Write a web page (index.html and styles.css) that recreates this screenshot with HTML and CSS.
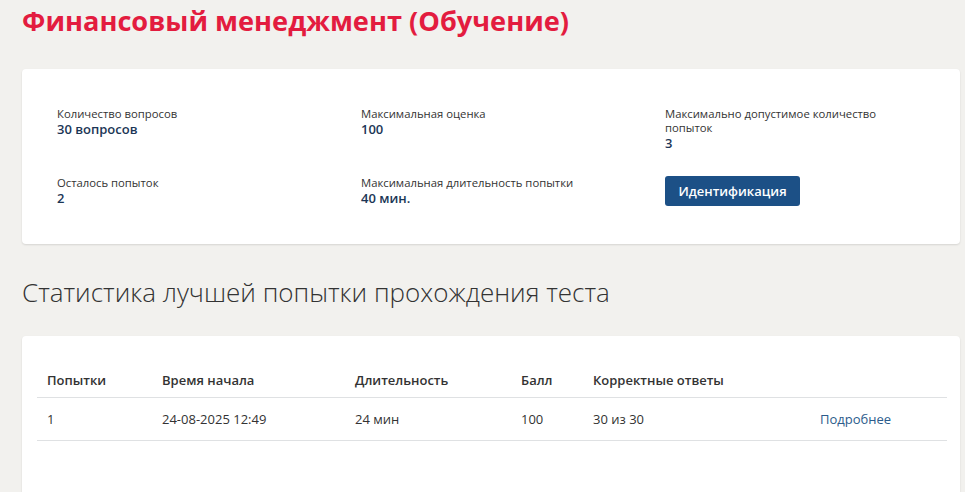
FILE: index.html
```html
<!DOCTYPE html>
<html lang="ru">
<head>
<meta charset="utf-8">
<title>Финансовый менеджмент (Обучение)</title>
<link rel="stylesheet" href="styles.css">
</head>
<body>
<div class="page">
  <h1 class="title">Финансовый менеджмент (Обучение)</h1>

  <section class="card info">
    <div class="info-grid">
      <div class="item">
        <div class="label">Количество вопросов</div>
        <div class="value">30 вопросов</div>
      </div>
      <div class="item">
        <div class="label">Максимальная оценка</div>
        <div class="value">100</div>
      </div>
      <div class="item">
        <div class="label">Максимально допустимое количество попыток</div>
        <div class="value">3</div>
      </div>
      <div class="item">
        <div class="label">Осталось попыток</div>
        <div class="value">2</div>
      </div>
      <div class="item">
        <div class="label">Максимальная длительность попытки</div>
        <div class="value">40 мин.</div>
      </div>
      <div class="item">
        <button class="btn" type="button">Идентификация</button>
      </div>
    </div>
  </section>

  <h2 class="subtitle">Статистика лучшей попытки прохождения теста</h2>

  <section class="card stats">
    <table class="table">
      <colgroup>
        <col class="c1"><col class="c2"><col class="c3"><col class="c4"><col class="c5"><col class="c6">
      </colgroup>
      <thead>
        <tr>
          <th>Попытки</th>
          <th>Время начала</th>
          <th>Длительность</th>
          <th>Балл</th>
          <th>Корректные ответы</th>
          <th></th>
        </tr>
      </thead>
      <tbody>
        <tr>
          <td>1</td>
          <td>24-08-2025 12:49</td>
          <td>24 мин</td>
          <td>100</td>
          <td>30 из 30</td>
          <td><a class="link" href="#">Подробнее</a></td>
        </tr>
      </tbody>
    </table>
  </section>
</div>
</body>
</html>
```

FILE: styles.css
```css
* { box-sizing: border-box; }

body {
  margin: 0;
  background: #f2f1ee;
  font-family: "Open Sans", "Noto Sans", sans-serif;
  color: #333;
}

.page {
  padding-left: 22px;
  width: 960px;
}

.title {
  margin: 2px 0 0 0;
  font-size: 27.2px;
  line-height: 38px;
  font-weight: 700;
  color: #e31c3f;
}

.card {
  background: #fff;
  border-radius: 4px;
  box-shadow: 0 1px 2px rgba(0, 0, 0, 0.12);
}

.info {
  margin-top: 29px;
  height: 175px;
  padding: 38px 35px;
}

.info-grid {
  display: grid;
  grid-template-columns: repeat(3, 304px);
  row-gap: 25px;
  align-items: start;
}

.item { padding-right: 60px; }

.label {
  font-size: 11.3px;
  line-height: 14px;
  color: #333;
}

.value {
  font-size: 13px;
  line-height: 16px;
  font-weight: 600;
  color: #1b3656;
}

.btn {
  display: block;
  width: 135px;
  height: 30px;
  border: 0;
  border-radius: 3px;
  background: #1c5086;
  color: #fff;
  font-family: inherit;
  font-size: 13px;
  font-weight: 600;
  padding: 0;
  cursor: pointer;
}

.subtitle {
  margin: 31px 0 0 0;
  font-size: 26px;
  line-height: 35px;
  font-weight: 300;
  color: #333;
}

.stats {
  margin-top: 26px;
  padding: 23px 13px 60px 15px;
}

.table {
  width: 910px;
  border-collapse: collapse;
  table-layout: fixed;
  font-size: 13px;
}

.c1 { width: 115px; }
.c2 { width: 193px; }
.c3 { width: 166px; }
.c4 { width: 72px; }
.c5 { width: 227px; }
.c6 { width: 137px; }

.table th {
  text-align: left;
  font-weight: 600;
  color: #333;
  line-height: 18px;
  padding: 12px 10px 8px;
  border-bottom: 1px solid #dfe1e3;
}

.table td {
  line-height: 18px;
  padding: 12px 10px;
  color: #333;
  border-bottom: 1px solid #dfe1e3;
}

.link {
  color: #2b5b8b;
  text-decoration: none;
}
```
